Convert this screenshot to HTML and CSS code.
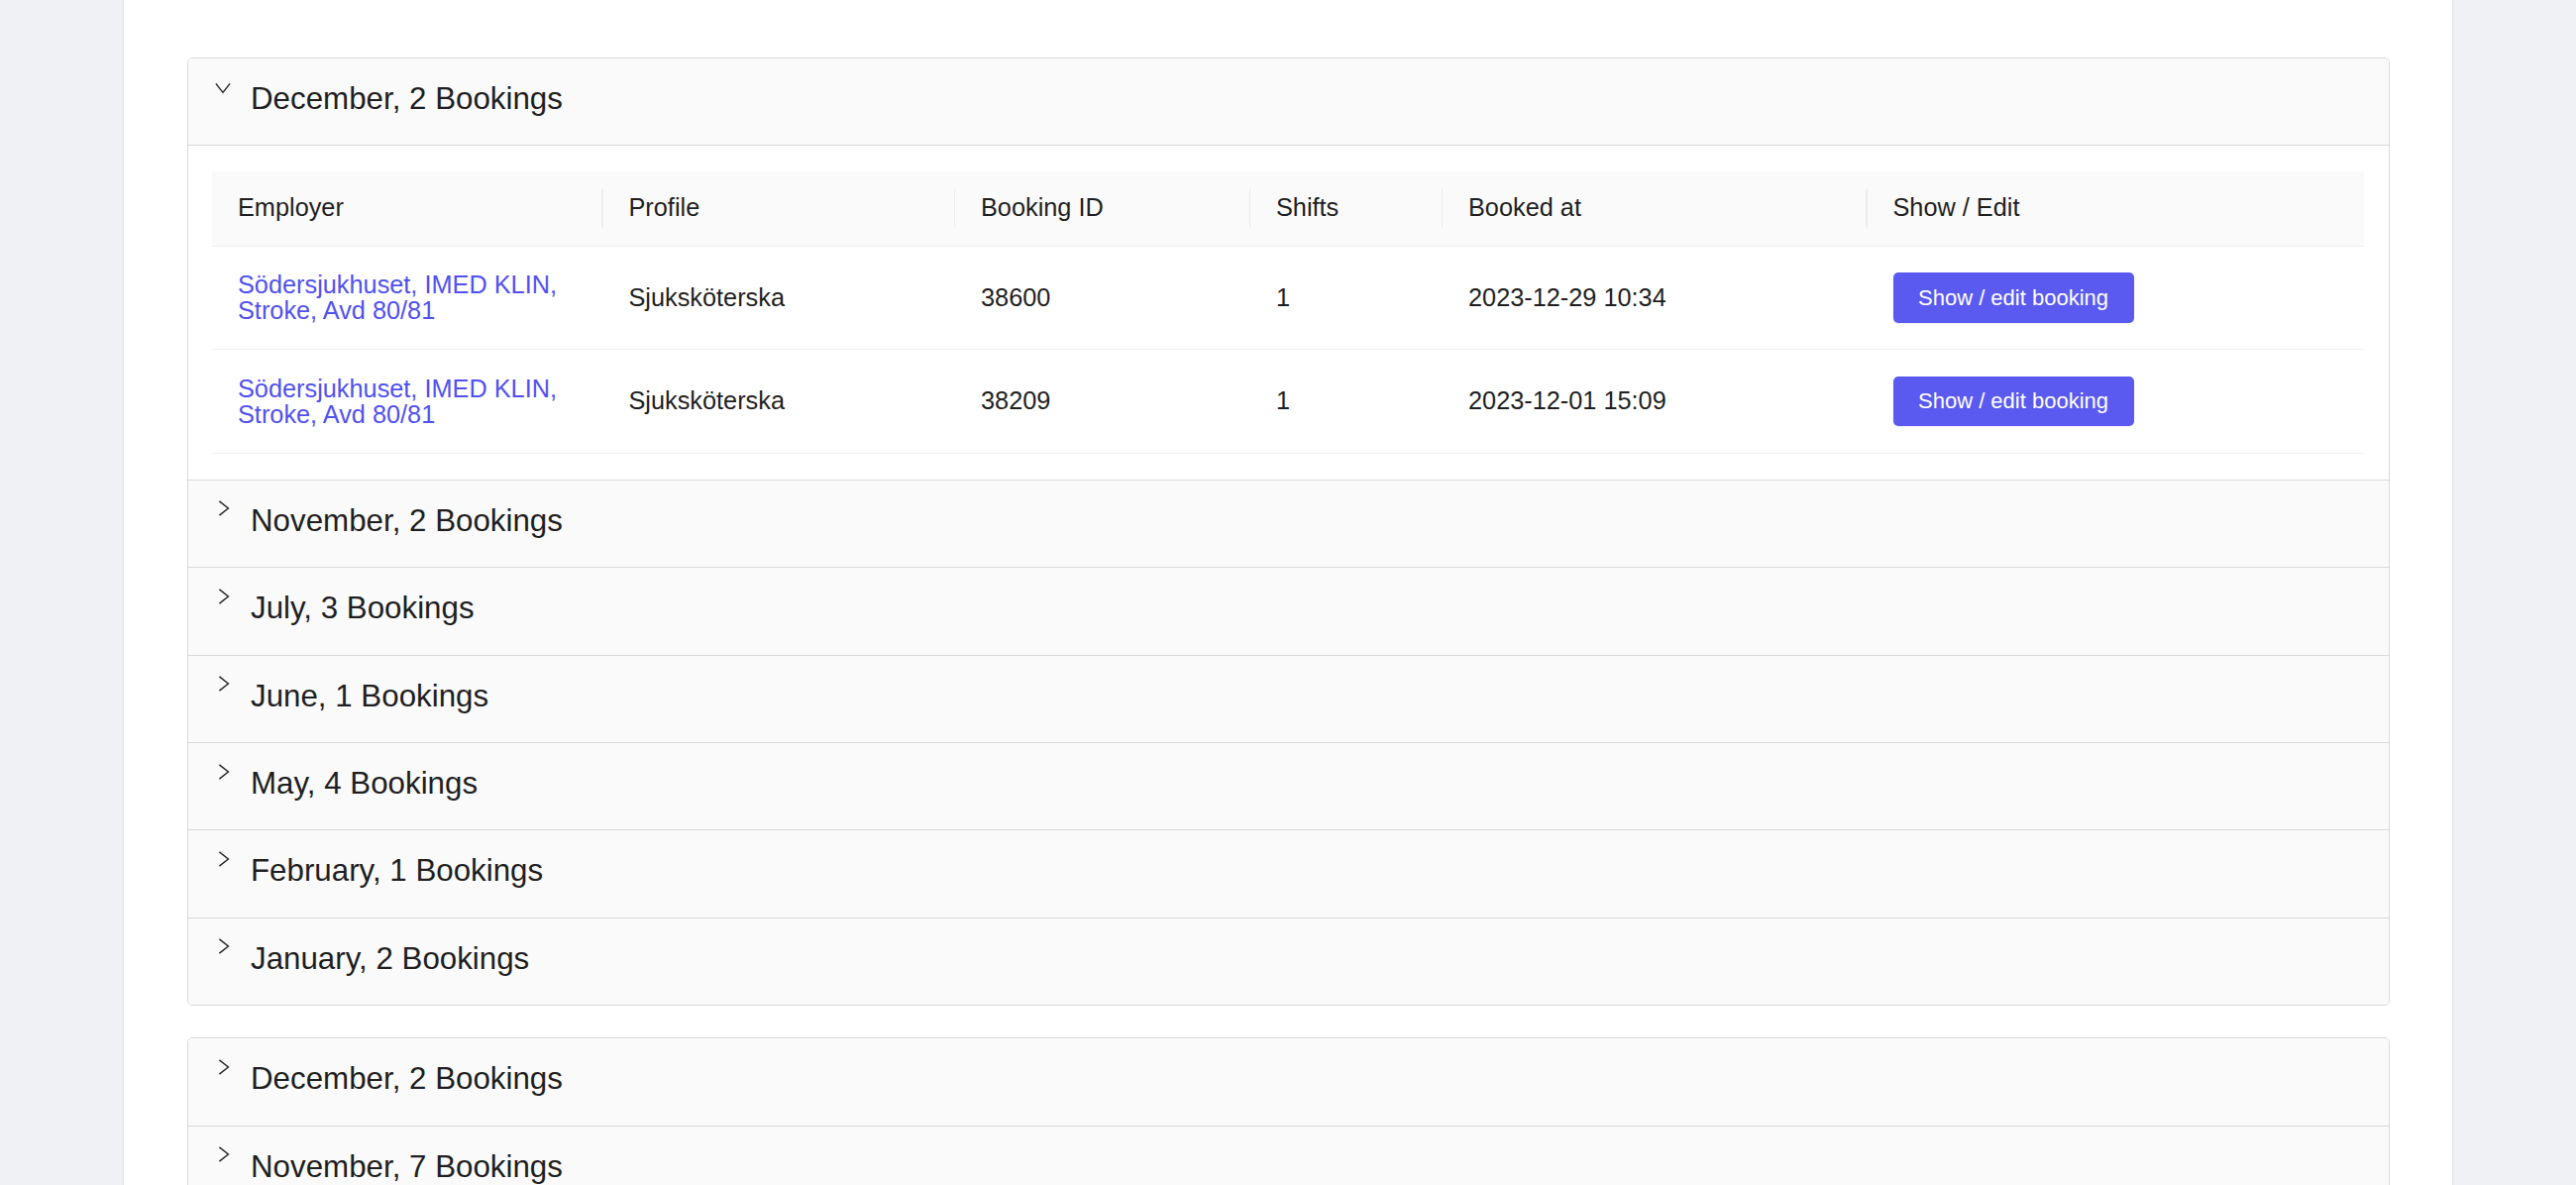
FILE: index.html
```html
<!DOCTYPE html>
<html lang="sv">
<head>
<meta charset="utf-8">
<title>Bookings</title>
<link rel="stylesheet" href="styles.css">
</head>
<body>
<div class="page">
  <main class="container">

    <section class="collapse">
      <div class="item open">
        <div class="item-header">
          <span class="arrow arrow-down"><svg viewBox="0 0 16 16" width="16" height="16"><path d="M4.4 0.9 L13.4 8 L4.4 15.1"/></svg></span>
          <span class="item-title">December, 2 Bookings</span>
        </div>
        <div class="item-body">
          <table class="bookings">
            <colgroup>
              <col class="c-employer">
              <col class="c-profile">
              <col class="c-id">
              <col class="c-shifts">
              <col class="c-booked">
              <col class="c-action">
            </colgroup>
            <thead>
              <tr>
                <th>Employer</th>
                <th>Profile</th>
                <th>Booking ID</th>
                <th>Shifts</th>
                <th>Booked at</th>
                <th>Show / Edit</th>
              </tr>
            </thead>
            <tbody>
              <tr>
                <td><a class="employer" href="#">Södersjukhuset, IMED KLIN, Stroke, Avd 80/81</a></td>
                <td>Sjuksköterska</td>
                <td>38600</td>
                <td>1</td>
                <td>2023-12-29 10:34</td>
                <td><button class="btn" type="button">Show / edit booking</button></td>
              </tr>
              <tr>
                <td><a class="employer" href="#">Södersjukhuset, IMED KLIN, Stroke, Avd 80/81</a></td>
                <td>Sjuksköterska</td>
                <td>38209</td>
                <td>1</td>
                <td>2023-12-01 15:09</td>
                <td><button class="btn" type="button">Show / edit booking</button></td>
              </tr>
            </tbody>
          </table>
        </div>
      </div>
      <div class="item">
        <div class="item-header">
          <span class="arrow"><svg viewBox="0 0 16 16" width="16" height="16"><path d="M4.4 0.9 L13.4 8 L4.4 15.1"/></svg></span>
          <span class="item-title">November, 2 Bookings</span>
        </div>
      </div>
      <div class="item">
        <div class="item-header">
          <span class="arrow"><svg viewBox="0 0 16 16" width="16" height="16"><path d="M4.4 0.9 L13.4 8 L4.4 15.1"/></svg></span>
          <span class="item-title">July, 3 Bookings</span>
        </div>
      </div>
      <div class="item">
        <div class="item-header">
          <span class="arrow"><svg viewBox="0 0 16 16" width="16" height="16"><path d="M4.4 0.9 L13.4 8 L4.4 15.1"/></svg></span>
          <span class="item-title">June, 1 Bookings</span>
        </div>
      </div>
      <div class="item">
        <div class="item-header">
          <span class="arrow"><svg viewBox="0 0 16 16" width="16" height="16"><path d="M4.4 0.9 L13.4 8 L4.4 15.1"/></svg></span>
          <span class="item-title">May, 4 Bookings</span>
        </div>
      </div>
      <div class="item">
        <div class="item-header">
          <span class="arrow"><svg viewBox="0 0 16 16" width="16" height="16"><path d="M4.4 0.9 L13.4 8 L4.4 15.1"/></svg></span>
          <span class="item-title">February, 1 Bookings</span>
        </div>
      </div>
      <div class="item">
        <div class="item-header">
          <span class="arrow"><svg viewBox="0 0 16 16" width="16" height="16"><path d="M4.4 0.9 L13.4 8 L4.4 15.1"/></svg></span>
          <span class="item-title">January, 2 Bookings</span>
        </div>
      </div>
    </section>

    <section class="collapse">
      <div class="item">
        <div class="item-header">
          <span class="arrow"><svg viewBox="0 0 16 16" width="16" height="16"><path d="M4.4 0.9 L13.4 8 L4.4 15.1"/></svg></span>
          <span class="item-title">December, 2 Bookings</span>
        </div>
      </div>
      <div class="item">
        <div class="item-header">
          <span class="arrow"><svg viewBox="0 0 16 16" width="16" height="16"><path d="M4.4 0.9 L13.4 8 L4.4 15.1"/></svg></span>
          <span class="item-title">November, 7 Bookings</span>
        </div>
      </div>
    </section>

  </main>
</div>
</body>
</html>
```

FILE: styles.css
```css
html, body {
  margin: 0;
  padding: 0;
}

body {
  background: #f0f1f5;
  font-family: "Liberation Sans", Arial, Helvetica, sans-serif;
  color: #1f1f1f;
  overflow: hidden;
}

.page {
  height: 100vh;
  overflow: hidden;
}

.container {
  width: 2350px;
  margin: 0 auto;
  min-height: 100%;
  box-sizing: border-box;
  background: #ffffff;
  padding: 58px 63px 40px 64px;
  box-shadow: 0 0 3px rgba(0, 0, 0, 0.12);
  display: flex;
  flex-direction: column;
  gap: 32px;
}

.collapse {
  border: 1px solid #d9d9d9;
  border-radius: 5px;
  background: #fafafa;
  overflow: hidden;
}

.item:not(:last-child) {
  border-bottom: 1px solid #d9d9d9;
}

.item-header {
  display: flex;
  align-items: flex-start;
  padding: 16px 24px 21.4px 27px;
  background: #fafafa;
}

.arrow {
  flex: none;
  width: 16px;
  height: 16px;
  margin-top: 4.5px;
  margin-right: 20px;
  display: flex;
}

.arrow svg {
  fill: none;
  stroke: #2a2a2a;
  stroke-width: 1.5;
}

.arrow-down svg {
  transform: rotate(90deg);
}

.item-title {
  font-size: 31.3px;
  line-height: 50px;
  color: #1f1f1f;
}

.item-body {
  background: #ffffff;
  border-top: 1px solid #d9d9d9;
  padding: 25.3px 25px 26px 24px;
}

.bookings {
  width: 100%;
  border-collapse: collapse;
  table-layout: fixed;
  font-size: 25.3px;
}

.c-employer { width: 394.5px; }
.c-profile { width: 355.5px; }
.c-id { width: 298px; }
.c-shifts { width: 194px; }
.c-booked { width: 428.5px; }

.bookings th {
  position: relative;
  text-align: left;
  font-weight: 400;
  background: #fafafa;
  padding: 17.7px 26px;
  line-height: 39.6px;
  border-bottom: 1px solid #f0f0f0;
  color: #1f1f1f;
}

.bookings th:not(:last-child)::before {
  content: "";
  position: absolute;
  right: 0;
  top: 50%;
  width: 1.5px;
  height: 39px;
  transform: translateY(-50%);
  background: #ececec;
}

.bookings td {
  padding: 25.3px 26px;
  line-height: 39.6px;
  vertical-align: middle;
  border-bottom: 1px solid #f0f0f0;
  color: #1f1f1f;
}

.employer {
  display: block;
  color: #5151ef;
  text-decoration: none;
  line-height: 26.5px;
}

.btn {
  font-family: "Liberation Sans", Arial, Helvetica, sans-serif;
  font-size: 22px;
  line-height: 31.6px;
  color: #ffffff;
  background: #5a5af0;
  border: none;
  border-radius: 5px;
  padding: 9.5px 25.5px;
  display: block;
  box-shadow: 0 1px 2px rgba(0, 0, 0, 0.08);
  cursor: pointer;
}
```
